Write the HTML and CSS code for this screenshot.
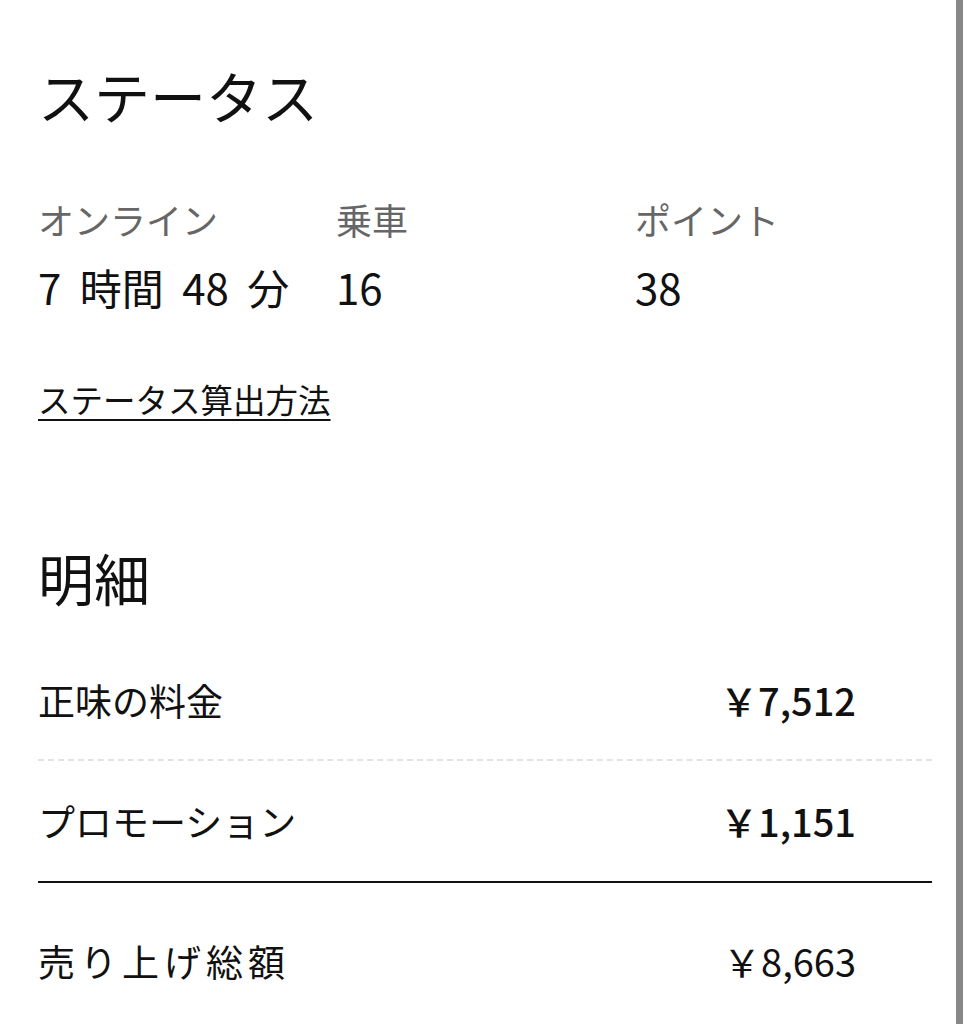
FILE: index.html
```html
<!DOCTYPE html>
<html lang="ja">

<head>
    <meta charset="UTF-8">
    <meta name="viewport" content="width=device-width, initial-scale=1.0">
    <title>ステータス</title>
    <link rel="stylesheet" href="styles.css">
</head>

<body>
    <div class="page">
        <main class="content">
            <h2 class="title">ステータス</h2>

            <div class="stats">
                <div class="stat">
                    <div class="stat-label">オンライン</div>
                    <div class="stat-value">7 時間 48 分</div>
                </div>
                <div class="stat">
                    <div class="stat-label">乗車</div>
                    <div class="stat-value">16</div>
                </div>
                <div class="stat">
                    <div class="stat-label">ポイント</div>
                    <div class="stat-value">38</div>
                </div>
            </div>

            <a class="how-link" href="#">ステータス算出方法</a>

            <h2 class="title title-detail">明細</h2>

            <div class="rows">
                <div class="row row-dashed">
                    <span class="row-label">正味の料金</span>
                    <span class="row-amount">￥7,512</span>
                </div>
                <div class="row row-solid">
                    <span class="row-label">プロモーション</span>
                    <span class="row-amount">￥1,151</span>
                </div>
                <div class="row row-total">
                    <span class="row-label">売り上げ総額</span>
                    <span class="row-amount">￥8,663</span>
                </div>
            </div>
        </main>

        <!-- scroll bar on the right edge -->
        <div class="scrollbar"></div>
    </div>
</body>

</html>
```

FILE: styles.css
```css
body {
    margin: 0;
    background-color: white;
    color: #111;
    font-family: "Noto Sans CJK JP", "Noto Sans", sans-serif;
}

.page {
    display: flex;
    min-height: 1024px;
}

.content {
    flex: 1;
    padding: 67px 24px 0 38px;
}

.scrollbar {
    width: 7px;
    margin-right: 6px;
    background-color: #888;
}

.title {
    margin: 0;
    font-size: 56px;
    font-weight: 400;
    line-height: 56px;
}

.stats {
    display: grid;
    grid-template-columns: 298px 299px 1fr;
    margin-top: 74px;
}

.stat-label {
    font-size: 36px;
    line-height: 44px;
    color: #666;
}

.stat-value {
    margin-top: 22px;
    font-size: 42px;
    line-height: 48px;
    word-spacing: 9px;
}

.how-link {
    display: inline-block;
    margin-top: 68px;
    font-size: 32.5px;
    line-height: 40px;
    color: #111;
    text-decoration: underline;
    text-underline-offset: 6px;
    text-decoration-thickness: 2px;
}

.title-detail {
    margin-top: 128px;
    line-height: 60px;
}

.rows {
    margin-top: 33px;
}

.row {
    display: flex;
    justify-content: space-between;
    align-items: center;
    height: 120px;
    padding-right: 76px;
}

.row-dashed {
    border-bottom: 2px dashed #e2e2e2;
    height: 119px;
}

.row-solid {
    border-bottom: 2px solid #111;
}

.row-total {
    height: 156px;
}

.row-label {
    font-size: 37px;
    line-height: 48px;
}

.row-total .row-label {
    letter-spacing: 5px;
}

.row-amount {
    font-size: 38px;
    font-weight: 500;
    line-height: 48px;
}

.row-total .row-amount {
    font-weight: 400;
}
```
